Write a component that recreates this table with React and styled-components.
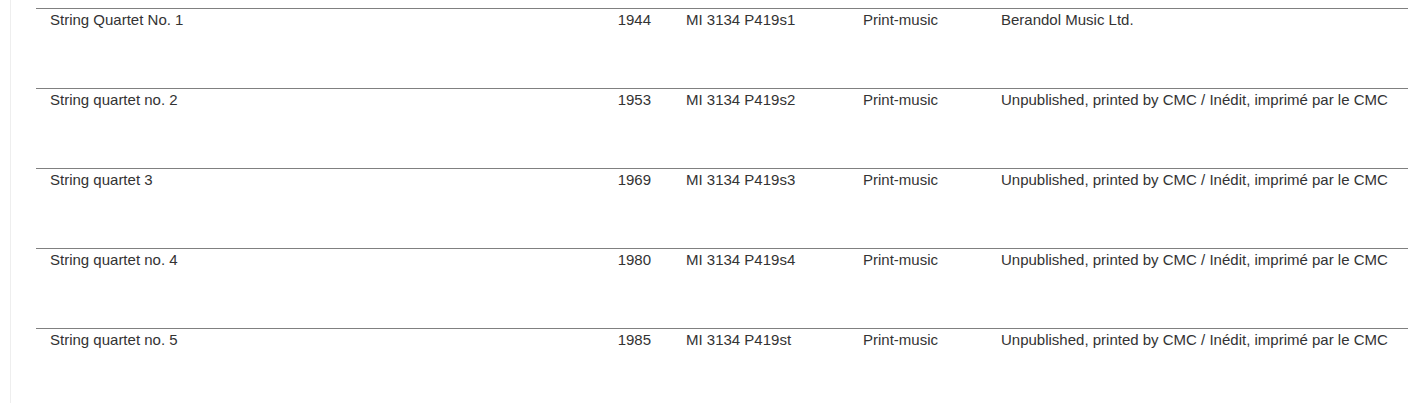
import React from "react";
import styled, { createGlobalStyle } from "styled-components";

const Global = createGlobalStyle`
  html, body { margin: 0; padding: 0; background: #fff; }
  body { font-family: "Liberation Sans", Arial, sans-serif; font-size: 15px; color: #333; overflow: hidden; }
`;

const Page = styled.div`
  padding-left: 10px;
  min-height: 100vh;
  box-sizing: border-box;
`;

const Panel = styled.div`
  border-left: 1px solid #eee;
  min-height: 100vh;
  padding: 8px 0 0 25px;
  box-sizing: border-box;
`;

const Table = styled.div`
  display: grid;
  grid-template-columns: 564px 65px 184px 138px 1fr;
`;

const Row = styled.div`
  display: contents;
`;

const Cell = styled.div`
  border-top: 1px solid #808080;
  height: 80px;
  box-sizing: border-box;
  padding: 2px 0 0 ${(p) => p.$pl ?? 14}px;
  padding-right: ${(p) => p.$pr ?? 0}px;
  text-align: ${(p) => p.$align || "left"};
  line-height: 17px;
  white-space: nowrap;
`;

const rows = [
  ["String Quartet No. 1", "1944", "MI 3134 P419s1", "Print-music", "Berandol Music Ltd."],
  ["String quartet no. 2", "1953", "MI 3134 P419s2", "Print-music", "Unpublished, printed by CMC / Inédit, imprimé par le CMC"],
  ["String quartet 3", "1969", "MI 3134 P419s3", "Print-music", "Unpublished, printed by CMC / Inédit, imprimé par le CMC"],
  ["String quartet no. 4", "1980", "MI 3134 P419s4", "Print-music", "Unpublished, printed by CMC / Inédit, imprimé par le CMC"],
  ["String quartet no. 5", "1985", "MI 3134 P419st", "Print-music", "Unpublished, printed by CMC / Inédit, imprimé par le CMC"],
];

export default function App() {
  return (
    <>
      <Global />
      <Page>
        <Panel>
          <Table>
            {rows.map((r) => (
              <Row key={r[2]}>
                <Cell>{r[0]}</Cell>
                <Cell $pl={0} $pr={14} $align="right">{r[1]}</Cell>
                <Cell $pl={21}>{r[2]}</Cell>
                <Cell>{r[3]}</Cell>
                <Cell>{r[4]}</Cell>
              </Row>
            ))}
          </Table>
        </Panel>
      </Page>
    </>
  );
}
